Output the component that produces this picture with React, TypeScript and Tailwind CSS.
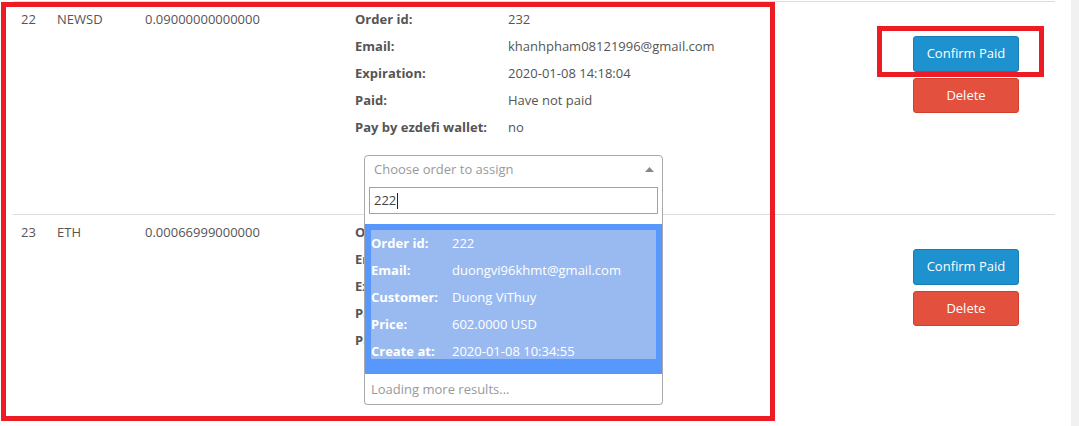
import React from "react";

type Detail = { label: string; value: string };

const rows = [
  {
    id: "22",
    currency: "NEWSD",
    amount: "0.09000000000000",
    details: [
      { label: "Order id:", value: "232" },
      { label: "Email:", value: "khanhpham08121996@gmail.com" },
      { label: "Expiration:", value: "2020-01-08 14:18:04" },
      { label: "Paid:", value: "Have not paid" },
      { label: "Pay by ezdefi wallet:", value: "no" },
    ],
    open: true,
  },
  {
    id: "23",
    currency: "ETH",
    amount: "0.00066999000000",
    details: [
      { label: "Order id:", value: "233" },
      { label: "Email:", value: "test@gmail.com" },
      { label: "Expiration:", value: "2020-01-08 14:25:10" },
      { label: "Paid:", value: "Have not paid" },
      { label: "Pay by ezdefi wallet:", value: "no" },
    ],
    open: false,
  },
];

const option: Detail[] = [
  { label: "Order id:", value: "222" },
  { label: "Email:", value: "duongvi96khmt@gmail.com" },
  { label: "Customer:", value: "Duong ViThuy" },
  { label: "Price:", value: "602.0000 USD" },
  { label: "Create at:", value: "2020-01-08 10:34:55" },
];

function Dropdown() {
  return (
    <div className="absolute left-0 top-[27px] z-20 w-[299px] rounded-b-[4px] border border-t-0 border-[#aaa] bg-white">
      <div className="px-[4px] pt-[5px]">
        <div className="flex h-[27px] items-center border border-[#7ea6ea] px-[4px] text-[13px] text-[#444]">
          222<span className="ml-[1px] inline-block h-[16px] w-[1px] bg-[#222]" />
        </div>
      </div>
      <div className="mt-[10px] bg-[#5897fb] px-[6px] pb-[15px] pt-[6px]">
        <div className="h-[129px] bg-[#99baf0]">
          {option.map((d) => (
            <div key={d.label} className="flex h-[27px] items-center text-[13px] text-white">
              <span className="w-[81px] font-bold">{d.label}</span>
              <span>{d.value}</span>
            </div>
          ))}
        </div>
      </div>
      <div className="flex h-[30px] items-center px-[6px] pt-[2px] text-[13px] text-[#999]">Loading more results...</div>
    </div>
  );
}

function Select({ open }: { open: boolean }) {
  return (
    <div className="relative ml-[9px] mt-[14px] w-[299px]">
      <div
        className={
          open
            ? "flex h-[28px] items-center justify-between rounded-t-[4px] border border-[#aaa] px-[9px] pt-[2px] text-[13px] text-[#999]"
            : "flex h-[28px] items-center justify-between rounded-[4px] border border-[#aaa] px-[9px] pt-[2px] text-[13px] text-[#999]"
        }
      >
        <span>Choose order to assign</span>
        <svg width="9" height="5" viewBox="0 0 9 5" className="mr-[-1px] -mt-[2px]">
          {open ? <path d="M0 5 L4.5 0 L9 5 Z" fill="#888" /> : <path d="M0 0 L4.5 5 L9 0 Z" fill="#888" />}
        </svg>
      </div>
      {open && <Dropdown />}
    </div>
  );
}

export default function App() {
  return (
    <div
      className="relative flex h-[426px] w-full overflow-hidden bg-white text-[13px] text-[#555]"
      style={{ fontFamily: '"Open Sans", "Noto Sans", sans-serif' }}
    >
      <div className="flex-1">
        <div className="ml-[13px] mr-[16px] mt-[1px]">
          {rows.map((r) => (
            <div key={r.id} className="grid grid-cols-[44px_88px_210px_1fr_185px] border-t border-[#ddd] pb-[31px]">
              <div className="pl-[8px] pt-[4px] leading-[27px]">{r.id}</div>
              <div className="pt-[4px] leading-[27px]">{r.currency}</div>
              <div className="pt-[4px] leading-[27px]">{r.amount}</div>
              <div className="pt-[4px]">
                {r.details.map((d) => (
                  <div key={d.label} className="flex h-[27px] items-center">
                    <span className="w-[153px] font-bold">{d.label}</span>
                    <span>{d.value}</span>
                  </div>
                ))}
                <Select open={r.open} />
              </div>
              <div className="flex flex-col items-start gap-[6px] pl-[43px] pt-[34px]">
                <button className="h-[36px] w-[106px] rounded-[3px] border border-[#1a7cb3] bg-[#1e91cf] text-[13px] text-white">
                  Confirm Paid
                </button>
                <button className="h-[35px] w-[106px] rounded-[3px] border border-[#d43f2c] bg-[#e3503e] text-[13px] text-white">
                  Delete
                </button>
              </div>
            </div>
          ))}
        </div>
      </div>
      <div className="w-[8px] bg-[#f1f1f1]" />

      {/* annotation boxes */}
      <div className="pointer-events-none absolute left-[1px] top-[2px] z-30 h-[419px] w-[774px] border-[5px] border-[#ed1c24]" />
      <div className="pointer-events-none absolute left-[877px] top-[26px] z-30 h-[51px] w-[167px] border-[5px] border-[#ed1c24]" />
    </div>
  );
}
